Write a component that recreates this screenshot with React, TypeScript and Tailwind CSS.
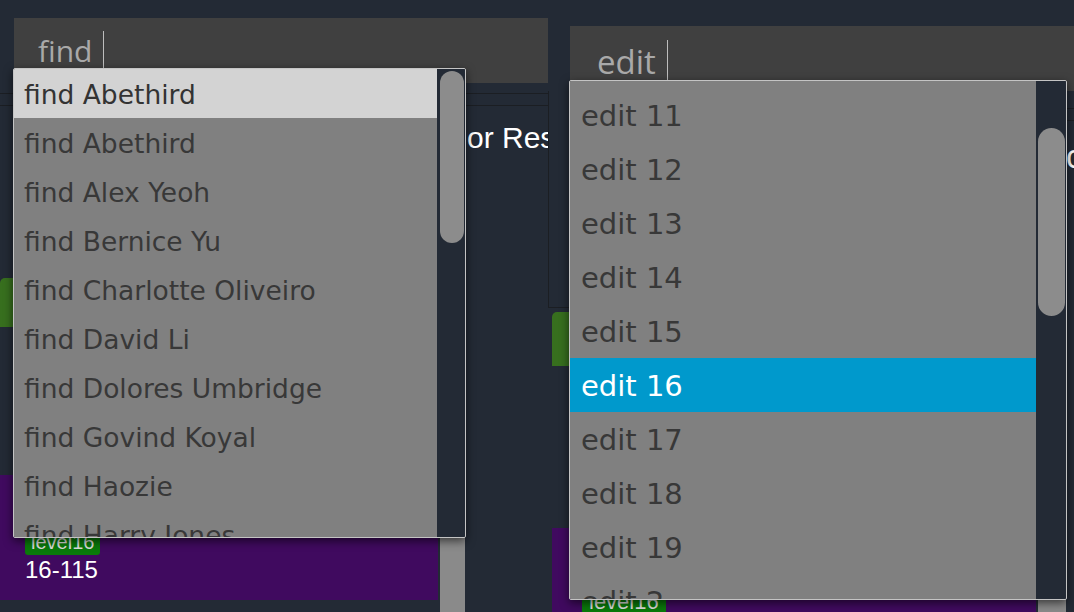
const findRows = [
  "find Abethird",
  "find Abethird",
  "find Alex Yeoh",
  "find Bernice Yu",
  "find Charlotte Oliveiro",
  "find David Li",
  "find Dolores Umbridge",
  "find Govind Koyal",
  "find Haozie",
  "find Harry Jones",
]

const editRows = ["edit 11", "edit 12", "edit 13", "edit 14", "edit 15", "edit 16", "edit 17", "edit 18", "edit 19", "edit 2"]

const App = (): JSX.Element => {
  return (
    <div className="relative flex h-[612px] w-[1074px] overflow-hidden bg-[#232a35] font-['DejaVu_Sans',sans-serif]">
      {/* left panel */}
      <div className="flex w-[548px] shrink-0 flex-col overflow-hidden">
        <div className="shrink-0 pl-[14px] pt-[18px]">
          <div className="flex h-[65px] items-start bg-[#404040] pl-[24px] pt-[13px]">
            <span className="font-['Open_Sans',sans-serif] text-[30px] leading-[40px] text-[#a9a9a9]">find</span>
            <span className="ml-[11px] h-[40px] w-px bg-[#bdbdbd]" />
          </div>
        </div>
        <div className="mt-[10px] h-[13px] shrink-0 border-y border-[#1b1e23]" />
        <div className="mt-[15px] shrink-0 whitespace-nowrap pl-[467px] font-['Liberation_Sans',sans-serif] text-[30px] leading-[34px] text-white">
          or Results
        </div>
        <div className="mt-[123px] flex shrink-0">
          <div className="flex w-[438px] shrink-0 flex-col">
            <div className="h-[49px] shrink-0 rounded-tl-[5px] bg-[#376f1e]" />
            <div className="h-[148px] shrink-0" />
            <div className="h-[125px] shrink-0 bg-[#400a5f] pl-[25px] pt-[55px] font-['Liberation_Sans',sans-serif]">
              <span className="inline-block h-[25px] rounded-[3px] bg-[#0a7a0a] px-[6px] text-[20px] leading-[25px] text-[#dcdcdc]">level16</span>
              <div className="text-[24px] leading-[28px] text-white">16-115</div>
            </div>
          </div>
          <div className="ml-[2px] h-[340px] w-[25px] shrink-0 bg-[#8a8a8a]" />
        </div>
      </div>

      {/* right panel */}
      <div className="flex flex-1 flex-col overflow-hidden">
        <div className="shrink-0 pl-[22px] pt-[26px]">
          <div className="flex h-[65px] items-start bg-[#404040] pl-[27px] pt-[14px]">
            <span className="font-['Open_Sans',sans-serif] text-[33px] leading-[44px] text-[#a9a9a9]">edit</span>
            <span className="ml-[11px] h-[44px] w-px bg-[#bdbdbd]" />
          </div>
        </div>
        <div className="flex h-[217px] shrink-0">
          <div className="w-[21px] shrink-0 border-b border-l border-[#1b1e23]" />
          <div className="flex-1">
            <div className="mt-[17px] h-[13px] border-y border-[#1b1e23]" />
            <div className="mt-[17px] whitespace-nowrap pl-[497px] font-['Liberation_Sans',sans-serif] text-[33px] leading-[37px] text-white">
              or Results
            </div>
          </div>
        </div>
        <div className="mt-[4px] flex shrink-0 pl-[4px]">
          <div className="flex w-[484px] shrink-0 flex-col">
            <div className="h-[54px] shrink-0 rounded-tl-[5px] bg-[#376f1e]" />
            <div className="h-[162px] shrink-0" />
            <div className="h-[138px] shrink-0 bg-[#400a5f] pl-[30px] pt-[60px] font-['Liberation_Sans',sans-serif]">
              <span className="inline-block h-[27px] rounded-[3px] bg-[#0a7a0a] px-[7px] text-[22px] leading-[27px] text-[#dcdcdc]">level16</span>
            </div>
          </div>
          <div className="ml-[2px] h-[340px] w-[28px] shrink-0 bg-[#8a8a8a]" />
        </div>
      </div>

      {/* find dropdown */}
      <div className="absolute left-[13px] top-[68px] flex h-[470px] w-[453px] overflow-hidden rounded-[2px] border border-[#c4c4c4] shadow-[0_3px_10px_rgba(0,0,0,0.6)]">
        <div className="w-[423px] shrink-0 bg-[#808080]">
          {findRows.map((row, i) => (
            <div
              key={i}
              className={`flex h-[49px] items-center whitespace-nowrap pl-[10px] pt-[3px] text-[26.5px] ${i === 0 ? "bg-[#d3d3d3] text-[#333]" : "text-[#383838]"}`}
            >
              {row}
            </div>
          ))}
        </div>
        <div className="flex-1 bg-[#232a35] pl-[3px] pt-[2px]">
          <div className="h-[172px] w-[24px] rounded-full bg-[#8c8c8c]" />
        </div>
      </div>

      {/* edit dropdown */}
      <div className="absolute left-[569px] top-[80px] flex h-[520px] w-[498px] overflow-hidden rounded-[2px] border border-[#c4c4c4] shadow-[0_3px_10px_rgba(0,0,0,0.6)]">
        <div className="w-[466px] shrink-0 bg-[#808080] pt-[7px]">
          {editRows.map((row) => (
            <div
              key={row}
              className={`flex h-[54px] items-center whitespace-nowrap pl-[11px] pt-[4px] text-[29px] ${row === "edit 16" ? "bg-[#0099cc] text-white" : "text-[#383838]"}`}
            >
              {row}
            </div>
          ))}
        </div>
        <div className="flex-1 bg-[#232a35] pl-[2px] pt-[47px]">
          <div className="h-[188px] w-[27px] rounded-full bg-[#8c8c8c]" />
        </div>
      </div>
    </div>
  )
}

export default App
